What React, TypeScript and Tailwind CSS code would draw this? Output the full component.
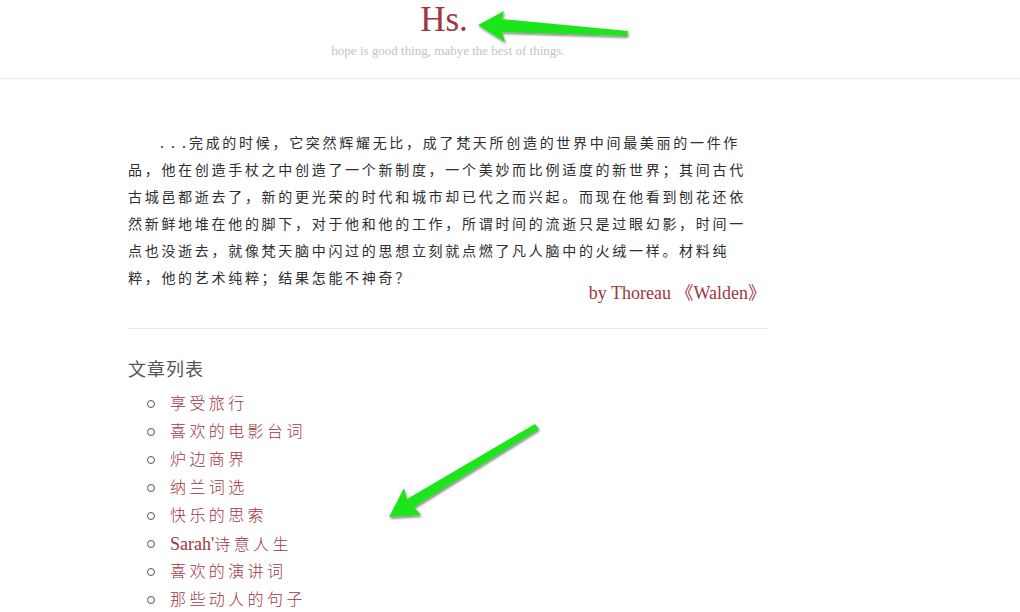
import React from "react";

const quoteLines = [
  "完成的时候，它突然辉耀无比，成了梵天所创造的世界中间最美丽的一件作",
  "品，他在创造手杖之中创造了一个新制度，一个美妙而比例适度的新世界；其间古代",
  "古城邑都逝去了，新的更光荣的时代和城市却已代之而兴起。而现在他看到刨花还依",
  "然新鲜地堆在他的脚下，对于他和他的工作，所谓时间的流逝只是过眼幻影，时间一",
  "点也没逝去，就像梵天脑中闪过的思想立刻就点燃了凡人脑中的火绒一样。材料纯",
  "粹，他的艺术纯粹；结果怎能不神奇？",
];

const articles: { latin?: string; cjk: string }[] = [
  { cjk: "享受旅行" },
  { cjk: "喜欢的电影台词" },
  { cjk: "炉边商界" },
  { cjk: "纳兰词选" },
  { cjk: "快乐的思索" },
  { latin: "Sarah'", cjk: "诗意人生" },
  { cjk: "喜欢的演讲词" },
  { cjk: "那些动人的句子" },
];

function Arrows() {
  return (
    <svg
      className="pointer-events-none absolute left-0 top-0"
      width="1020"
      height="612"
      viewBox="0 0 1020 612"
    >
      <defs>
        <filter id="sh" x="-20%" y="-20%" width="140%" height="160%">
          <feDropShadow dx="1" dy="2" stdDeviation="1.2" floodColor="#000" floodOpacity="0.45" />
        </filter>
      </defs>
      <polygon
        filter="url(#sh)"
        fill="#1fe51f"
        points="478,25 504,11 502,19 628,31 627,36 502,32 505,42"
      />
      <polygon
        filter="url(#sh)"
        fill="#1fe51f"
        points="389,517 404,488 407,499 535,424 539,429 414,507 421,515"
      />
    </svg>
  );
}

export default function App() {
  return (
    <div className="relative h-[612px] w-[1020px] overflow-hidden bg-white">
      <header className="border-b border-[#ececec] pb-[19px]">
        <div className="ml-[128px] w-[640px] text-center">
          <div
            className="pr-[8px] pt-[1px] text-[35px] leading-[38px] text-[#a2353d]"
            style={{ fontFamily: '"Liberation Serif", serif' }}
          >
            Hs.
          </div>
          <div
            className="mt-[4px] text-[13px] leading-[16px] text-[#c3c3c3]"
            style={{ fontFamily: '"Liberation Serif", serif' }}
          >
            hope is good thing, mabye the best of things.
          </div>
        </div>
      </header>

      <main className="ml-[128px] w-[640px] pt-[50px]">
        <p
          className="text-[14px] leading-[27px] tracking-[2.7px] text-[#2e2e2e]"
          style={{ fontFamily: '"Noto Sans CJK SC", sans-serif' }}
        >
          <span className="ml-[32px] mr-[1px] inline-block tracking-[2px]">. . .</span>
          {quoteLines.map((l, i) => (
            <React.Fragment key={i}>
              {l}
              {i < quoteLines.length - 1 && <br />}
            </React.Fragment>
          ))}
        </p>
        <div
          className="-mt-[10px] pr-[2px] text-right text-[18px] leading-[24px] text-[#a2353d]"
          style={{ fontFamily: '"Liberation Serif", "Noto Sans CJK SC", serif' }}
        >
          by Thoreau 《Walden》
        </div>
        <div className="mt-[23px] border-t border-[#e8e8e8]" />
        <h2
          className="mt-[27px] text-[18px] leading-[24px] tracking-[1px] text-[#555]"
          style={{ fontFamily: '"Noto Sans CJK SC", sans-serif' }}
        >
          文章列表
        </h2>
        <ul
          className="mt-[10px] flex flex-col"
          style={{ fontFamily: '"Liberation Serif", "Noto Sans CJK SC", serif' }}
        >
          {articles.map((a) => (
            <li key={a.cjk} className="flex h-[28px] items-center">
              <span className="ml-[19px] mr-[15px] h-[8px] w-[8px] rounded-full border-[1.5px] border-[#555]" />
              <span className="text-[16px] font-light tracking-[3.4px] text-[#a2353d]">
                {a.latin && <span className="text-[18px] font-normal tracking-normal">{a.latin}</span>}
                {a.cjk}
              </span>
            </li>
          ))}
        </ul>
      </main>

      <Arrows />
    </div>
  );
}
